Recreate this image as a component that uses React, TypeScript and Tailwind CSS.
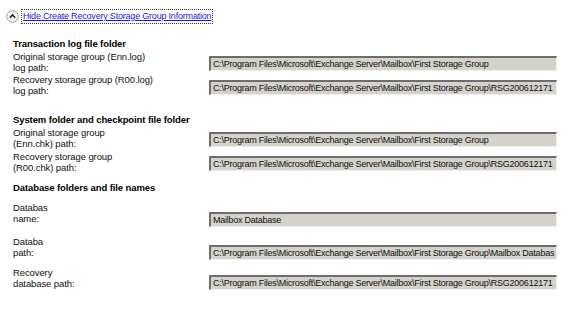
import React from "react";

const sans = { fontFamily: '"Liberation Sans", Arial, sans-serif' };

type Row = { label: string[]; value: string; mt: string; boxMt: string };

const FSG = "C:\\Program Files\\Microsoft\\Exchange Server\\Mailbox\\First Storage Group";

const sections: { title: string; mt: string; rows: Row[] }[] = [
  {
    title: "Transaction log file folder",
    mt: "mt-[14px]",
    rows: [
      { label: ["Original storage group (Enn.log)", "log path:"], value: FSG, mt: "mt-[2px]", boxMt: "mt-[5px]" },
      { label: ["Recovery storage group (R00.log)", "log path:"], value: FSG + "\\RSG200612171", mt: "mt-[1px]", boxMt: "mt-[6px]" },
    ],
  },
  {
    title: "System folder and checkpoint file folder",
    mt: "mt-[18px]",
    rows: [
      { label: ["Original storage group", "(Enn.chk) path:"], value: FSG, mt: "mt-[2px]", boxMt: "mt-[5px]" },
      { label: ["Recovery storage group", "(R00.chk) path:"], value: FSG + "\\RSG200612171", mt: "mt-[2px]", boxMt: "mt-[5px]" },
    ],
  },
  {
    title: "Database folders and file names",
    mt: "mt-[9px]",
    rows: [
      { label: ["Databas", "name:"], value: "Mailbox Database", mt: "mt-[9px]", boxMt: "mt-[10px]" },
      { label: ["Databa", "path:"], value: FSG + "\\Mailbox Databas", mt: "mt-[9px]", boxMt: "mt-[9px]" },
      { label: ["Recovery", "database path:"], value: FSG + "\\RSG200612171", mt: "mt-[7px]", boxMt: "mt-[8px]" },
    ],
  },
];

function ChevronCircle() {
  return (
    <svg width="13" height="13" viewBox="0 0 13 13">
      <circle cx="6.5" cy="6.5" r="5.8" fill="#f4f4f4" stroke="#9a9a9a" strokeWidth="1" />
      <path d="M3.8 7.8 L6.5 5 L9.2 7.8" fill="none" stroke="#222" strokeWidth="1.6" />
    </svg>
  );
}

export default function App() {
  return (
    <div className="w-[572px] h-[318px] bg-white text-black overflow-hidden text-[9px] leading-[11px]" style={sans}>
      {/* toggle link */}
      <div className="flex items-center pt-[9px] pl-[6px]">
        <ChevronCircle />
        <span className="ml-[2px] px-[1px] py-[1px] border border-dotted border-[#333] text-[#1a1adb] underline text-[9px] leading-[11px] tracking-[-0.2px]">
          Hide Create Recovery Storage Group Information
        </span>
      </div>

      <div className="pl-[13px]">
        {sections.map((s) => (
          <div key={s.title} className={s.mt}>
            <div className="font-bold text-[9.5px] leading-[11px] tracking-[-0.1px]">{s.title}</div>
            {s.rows.map((r, i) => (
              <div key={i} className={`flex items-start ${r.mt}`}>
                <div className="w-[196px] shrink-0 text-[#111] text-[9.5px] tracking-[-0.1px]">
                  {r.label.map((l) => (
                    <div key={l}>{l}</div>
                  ))}
                </div>
                <div
                  className={`${r.boxMt} w-[348px] h-[15px] bg-[#d5d2cc] border-t-2 border-l-2 border-t-[#6e6e6e] border-l-[#6e6e6e] border-b border-r border-b-[#f0f0f0] border-r-[#f0f0f0] flex items-center pl-[2px] text-[9px] tracking-[-0.25px] text-[#111] whitespace-nowrap overflow-hidden`}
                >
                  {r.value}
                </div>
              </div>
            ))}
          </div>
        ))}
      </div>
    </div>
  );
}
